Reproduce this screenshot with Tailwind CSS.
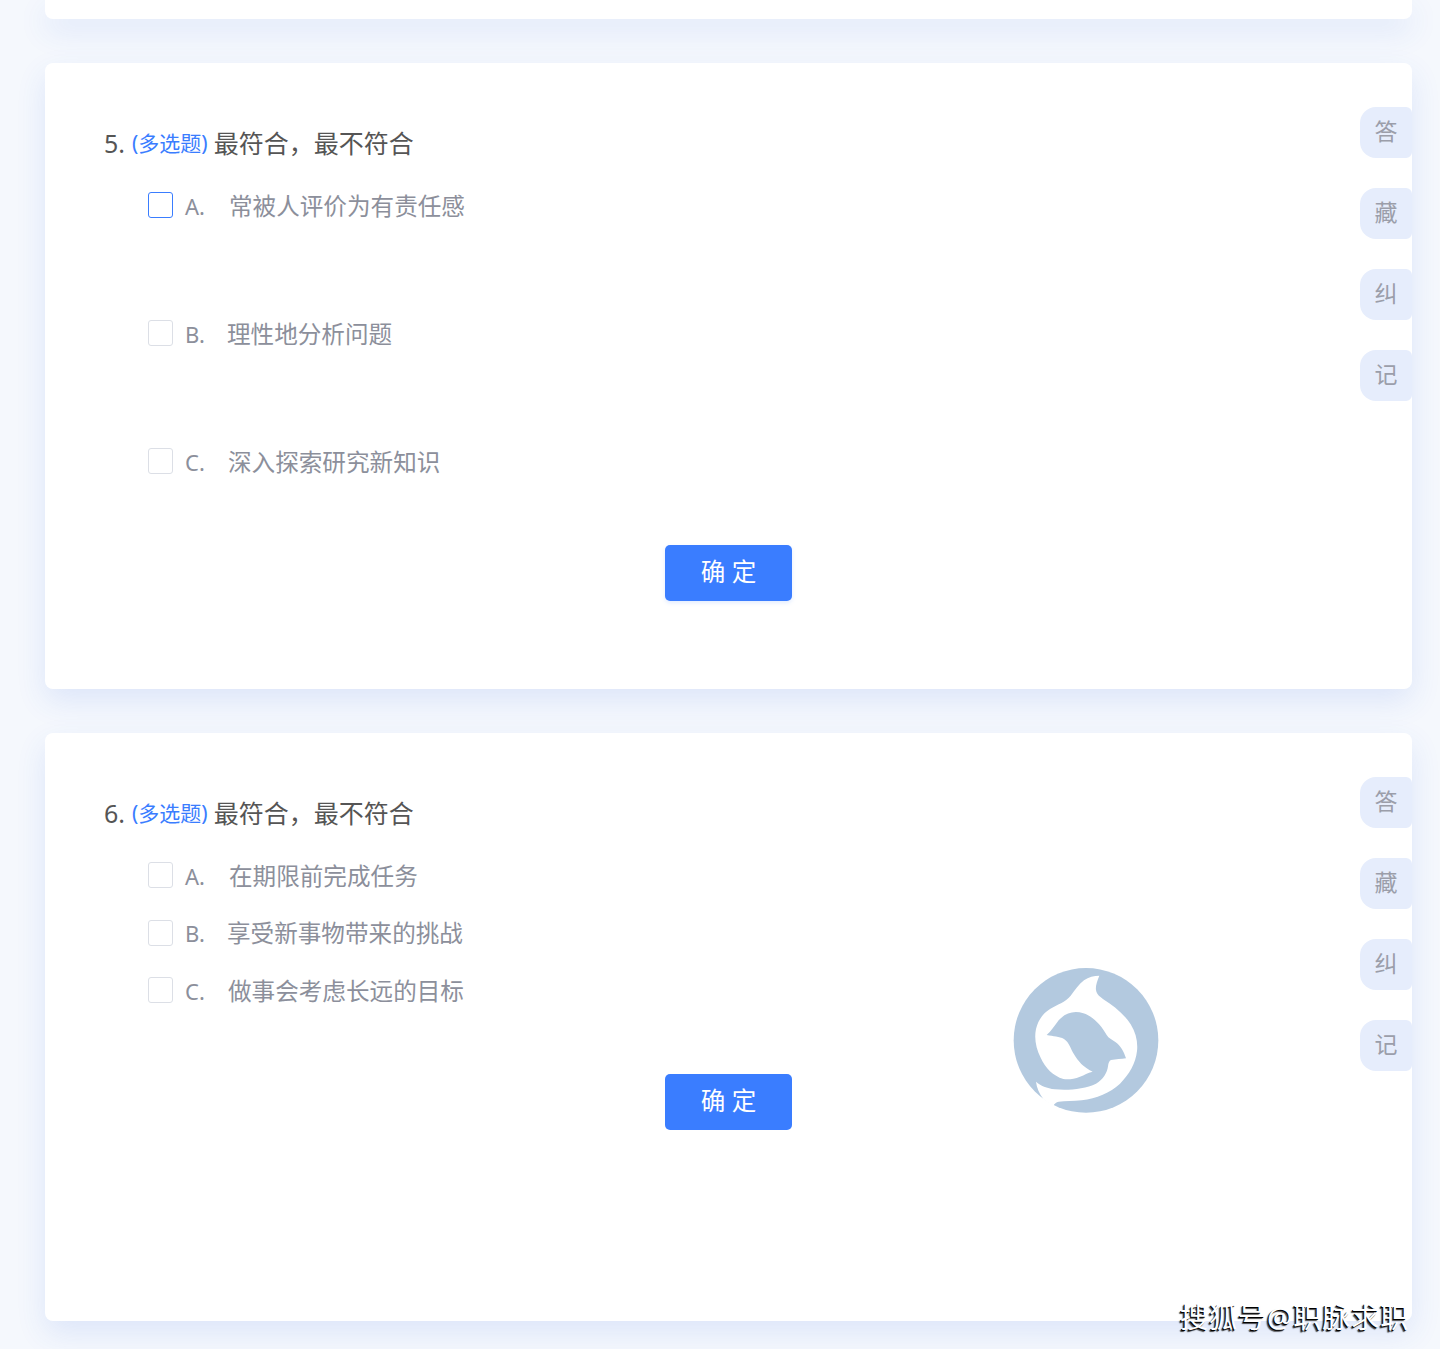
<!DOCTYPE html>
<html lang="zh-CN">
<head>
<meta charset="utf-8">
<title>测评</title>
<script src="https://cdn.jsdelivr.net/npm/@tailwindcss/browser@4"></script>
</head>
<body class="m-0 bg-[#f5f8fd] font-['Noto_Sans','Noto_Sans_CJK_SC',sans-serif]">
<main class="relative h-[1349px] w-[1440px] overflow-hidden pl-[45px] pr-[28px]">
  <div class="h-[19px] rounded-b-lg bg-white shadow-[0_12px_30px_rgba(50,100,220,0.12)]"></div>

  <section class="relative mt-[44px] h-[626px] rounded-lg bg-white pt-[63px] shadow-[0_12px_30px_rgba(50,100,220,0.12)]">
    <h2 class="flex h-[36px] items-center pl-[59px] text-[25px] font-normal text-[#555555]">
      <span>5.</span><span class="ml-[7px] text-[21px] text-[#3a7dff]">(多选题)</span><span class="ml-[6px]">最符合，最不符合</span>
    </h2>
    <div class="mt-[30px] flex flex-col gap-[100px] pl-[103px] text-[23.6px] text-[#8c8f9b]">
      <label class="flex h-[28px] items-center"><span class="h-[26px] w-[25px] self-start rounded-[3px] border border-[#3a7dff] bg-white"></span><span class="ml-[12px] w-[44px] text-[22px]">A.</span><span class="pt-[2px]">常被人评价为有责任感</span></label>
      <label class="flex h-[28px] items-center"><span class="h-[26px] w-[25px] self-start rounded-[3px] border border-[#dcdfe6] bg-white"></span><span class="ml-[12px] w-[42px] text-[22px]">B.</span><span class="pt-[2px]">理性地分析问题</span></label>
      <label class="flex h-[28px] items-center"><span class="h-[26px] w-[25px] self-start rounded-[3px] border border-[#dcdfe6] bg-white"></span><span class="ml-[12px] w-[43px] text-[22px]">C.</span><span class="pt-[2px]">深入探索研究新知识</span></label>
    </div>
    <button class="mx-auto mt-[69px] block h-[56px] w-[127px] rounded-[5px] bg-[#3a7dff] pb-[2px] text-[24.5px] text-white shadow-[0_2px_4px_rgba(58,125,255,0.15)]">确 定</button>
    <div class="absolute right-0 top-[44px] flex w-[52px] flex-col gap-[30px] text-[23px] text-[#9b9eaa]">
      <span class="flex h-[51px] items-center justify-center rounded-l-[16px] rounded-r-[6px] bg-[#e6edfc] pb-[3px]">答</span>
      <span class="flex h-[51px] items-center justify-center rounded-l-[16px] rounded-r-[6px] bg-[#e6edfc] pb-[3px]">藏</span>
      <span class="flex h-[51px] items-center justify-center rounded-l-[16px] rounded-r-[6px] bg-[#e6edfc] pb-[3px]">纠</span>
      <span class="flex h-[51px] items-center justify-center rounded-l-[16px] rounded-r-[6px] bg-[#e6edfc] pb-[3px]">记</span>
    </div>
  </section>

  <section class="relative mt-[44px] h-[588px] rounded-lg bg-white pt-[63px] shadow-[0_12px_30px_rgba(50,100,220,0.12)]">
    <h2 class="flex h-[36px] items-center pl-[59px] text-[25px] font-normal text-[#555555]">
      <span>6.</span><span class="ml-[7px] text-[21px] text-[#3a7dff]">(多选题)</span><span class="ml-[6px]">最符合，最不符合</span>
    </h2>
    <div class="mt-[30px] flex flex-col gap-[29.5px] pl-[103px] text-[23.6px] text-[#8c8f9b]">
      <label class="flex h-[28px] items-center"><span class="h-[26px] w-[25px] self-start rounded-[3px] border border-[#dcdfe6] bg-white"></span><span class="ml-[12px] w-[44px] text-[22px]">A.</span><span class="pt-[2px]">在期限前完成任务</span></label>
      <label class="flex h-[28px] items-center"><span class="h-[26px] w-[25px] self-start rounded-[3px] border border-[#dcdfe6] bg-white"></span><span class="ml-[12px] w-[42px] text-[22px]">B.</span><span class="pt-[1px]">享受新事物带来的挑战</span></label>
      <label class="flex h-[28px] items-center"><span class="h-[26px] w-[25px] self-start rounded-[3px] border border-[#dcdfe6] bg-white"></span><span class="ml-[12px] w-[43px] text-[22px]">C.</span><span class="pt-[2px]">做事会考虑长远的目标</span></label>
    </div>
    <button class="mx-auto mt-[69px] block h-[56px] w-[127px] rounded-[5px] bg-[#3a7dff] pb-[2px] text-[24.5px] text-white">确 定</button>
    <div class="absolute right-0 top-[44px] flex w-[52px] flex-col gap-[30px] text-[23px] text-[#9b9eaa]">
      <span class="flex h-[51px] items-center justify-center rounded-l-[16px] rounded-r-[6px] bg-[#e6edfc] pb-[3px]">答</span>
      <span class="flex h-[51px] items-center justify-center rounded-l-[16px] rounded-r-[6px] bg-[#e6edfc] pb-[3px]">藏</span>
      <span class="flex h-[51px] items-center justify-center rounded-l-[16px] rounded-r-[6px] bg-[#e6edfc] pb-[3px]">纠</span>
      <span class="flex h-[51px] items-center justify-center rounded-l-[16px] rounded-r-[6px] bg-[#e6edfc] pb-[3px]">记</span>
    </div>
  </section>

  <svg class="absolute left-[1000px] top-[955px] h-[170px] w-[170px]" viewBox="0 0 510 510" aria-hidden="true">
    <circle cx="258" cy="256" r="217" fill="#b3c9df"/>
    <path fill="#ffffff" d="M298 62 C292 78 286 92 288 105 C290 118 298 124 312 134 C340 152 372 176 392 208 C408 234 414 262 411 288 C407 325 388 358 360 386 C330 414 290 430 245 436 C220 439 195 438 176 440 C168 441 164 446 160 452 C150 446 138 440 130 432 C118 416 110 398 108 380 C122 392 140 400 165 403 C205 407 255 402 288 386 C310 374 322 352 324 334 C325 325 328 316 333 315 C348 313 364 312 378 310 C372 290 362 272 345 260 C336 254 326 250 320 240 C304 212 280 184 250 175 C222 166 196 174 176 196 C164 212 154 228 140 240 C160 244 178 244 192 252 C208 262 212 282 222 298 C234 318 250 338 278 350 C262 353 254 360 240 365 C222 372 206 374 190 372 C160 362 136 340 122 308 C108 280 102 250 108 222 C114 196 128 176 150 162 C172 148 196 142 212 122 C226 104 236 88 252 76 C266 66 282 62 298 62 Z"/>
  </svg>

  <p class="absolute left-[1180px] top-[1297px] text-[28px] leading-[40px] tracking-[1px] text-white [text-shadow:-1px_1px_0_#000,-2px_2px_1px_rgba(0,0,0,0.7)]">搜狐号@职脉求职</p>
</main>
</body>
</html>
